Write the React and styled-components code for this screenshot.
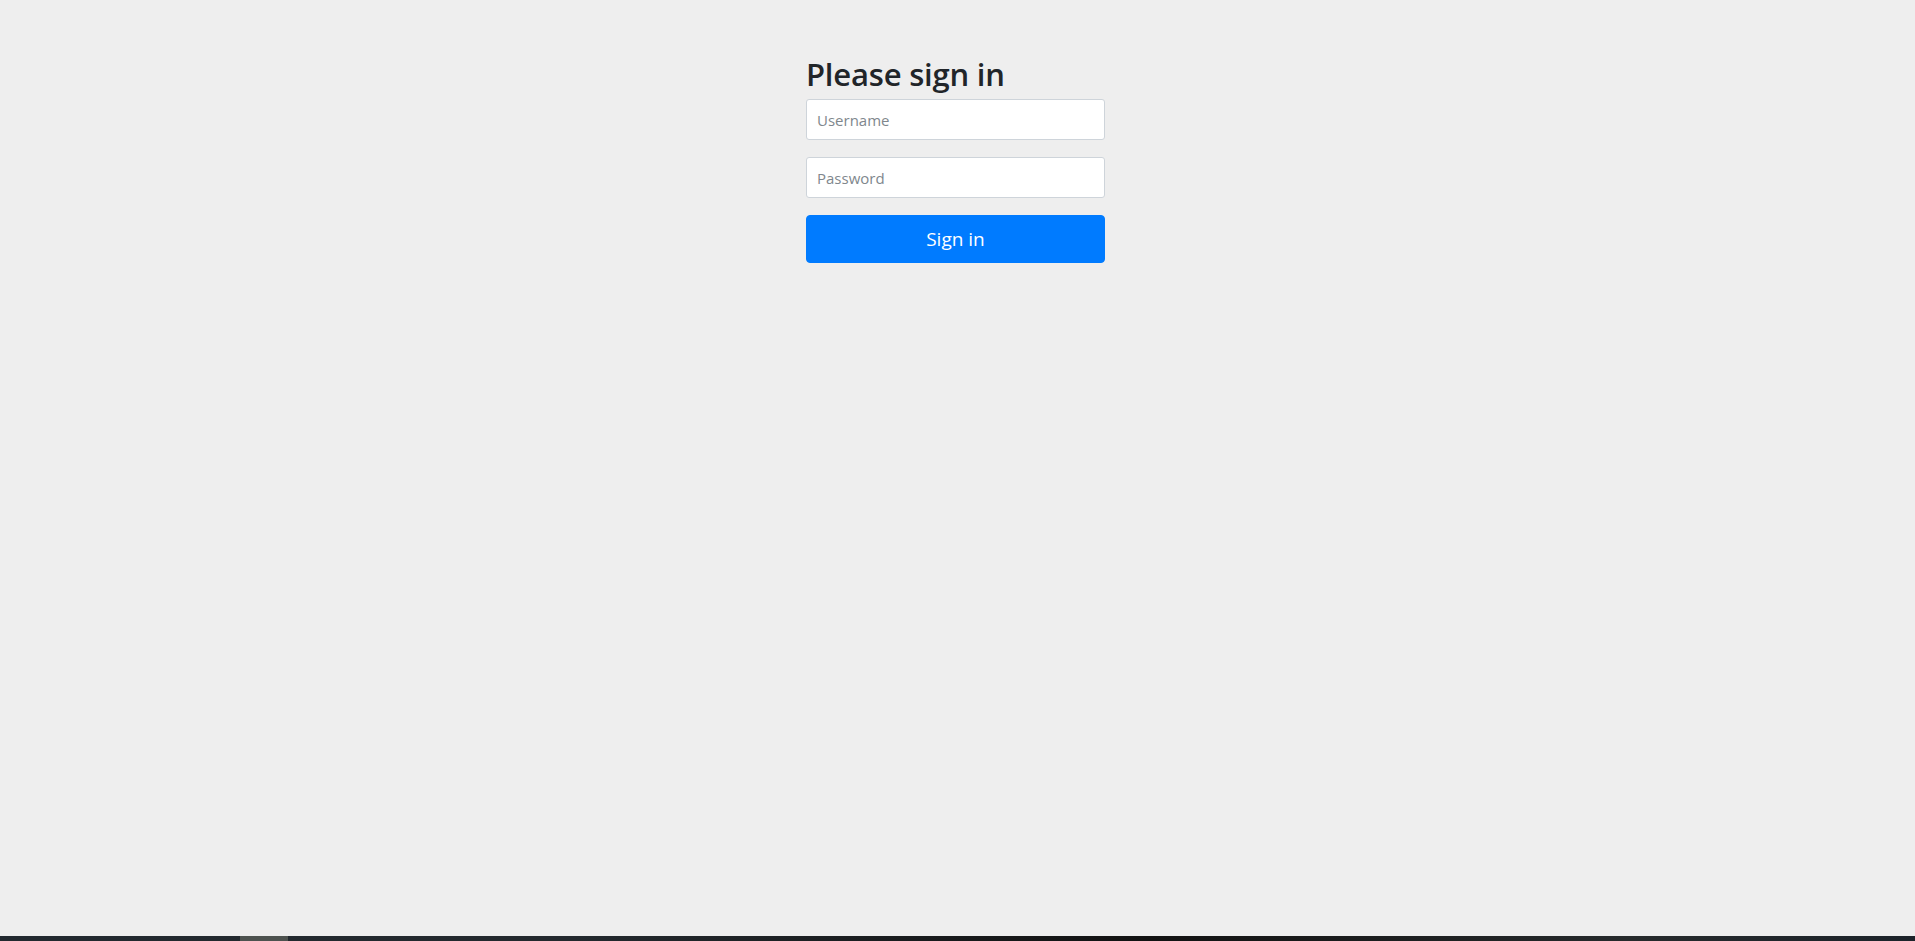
import styled, { createGlobalStyle } from "styled-components";

const GlobalStyle = createGlobalStyle`
  html, body {
    margin: 0;
    padding: 0;
    background: #eeeeee;
    font-family: "Open Sans", "Noto Sans", "Liberation Sans", sans-serif;
    color: #212529;
  }
  * {
    box-sizing: border-box;
  }
`;

const Page = styled.div`
  min-height: 100vh;
  display: flex;
  flex-direction: column;
`;

const Container = styled.div`
  flex: 1;
  display: flex;
  justify-content: center;
  padding-top: 55px;
  padding-right: 4px;
`;

const Form = styled.form`
  width: 299px;
  display: flex;
  flex-direction: column;
`;

const Heading = styled.h2`
  margin: 0 0 6px;
  font-size: 31px;
  font-weight: 600;
  line-height: 38px;
  letter-spacing: -0.2px;
`;

const Field = styled.p`
  margin: 0 0 17px;
`;

const Input = styled.input`
  display: block;
  width: 100%;
  height: 41px;
  padding: 0 10px;
  font-family: inherit;
  font-size: 15px;
  color: #495057;
  background: #fff;
  border: 1px solid #ced4da;
  border-radius: 3px;
  outline: none;

  &::placeholder {
    color: #80878d;
  }
`;

const Button = styled.button`
  display: block;
  width: 100%;
  height: 48px;
  font-family: inherit;
  font-size: 19px;
  color: #fff;
  background: #007bff;
  border: 1px solid #007bff;
  border-radius: 4px;
  cursor: pointer;
`;

const Taskbar = styled.div`
  height: 5px;
  display: flex;
  background: linear-gradient(90deg, #22292f 0%, #23292e 30%, #121212 60%, #262a2c 85%, #1c232a 100%);
`;

const TaskbarGap = styled.div`
  width: ${(props) => props.w}px;
  background: ${(props) => props.color || "transparent"};
`;

const App = () => {
  return (
    <Page>
      <GlobalStyle />
      <Container>
        <Form onSubmit={(e) => e.preventDefault()}>
          <Heading>Please sign in</Heading>
          <Field>
            <Input type="text" name="username" placeholder="Username" />
          </Field>
          <Field>
            <Input type="password" name="password" placeholder="Password" />
          </Field>
          <Button type="submit">Sign in</Button>
        </Form>
      </Container>
      <Taskbar>
        <TaskbarGap w={240} />
        <TaskbarGap w={48} color="#4d524f" />
      </Taskbar>
    </Page>
  );
};

export default App;
